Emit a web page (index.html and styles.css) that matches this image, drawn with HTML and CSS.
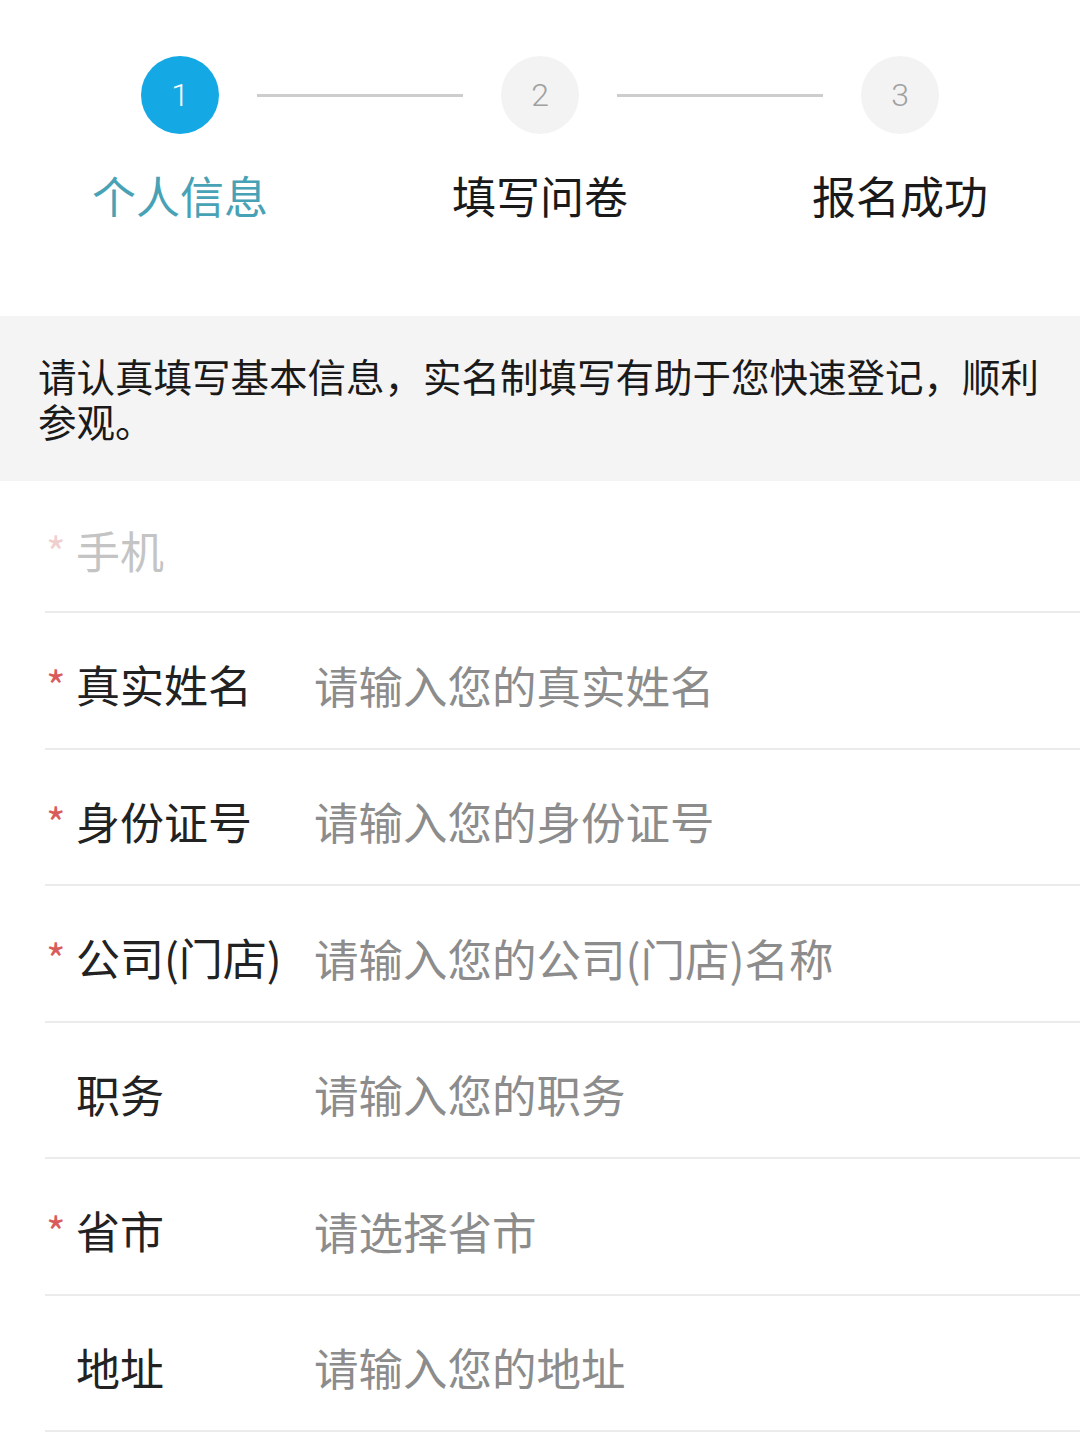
FILE: index.html
```html
<!DOCTYPE html>
<html lang="zh-CN">
<head>
  <meta charset="UTF-8" />
  <meta name="viewport" content="width=device-width, initial-scale=1.0"/>
  <title>报名 - 个人信息</title>
  <link rel="stylesheet" href="styles.css">
</head>
<body>
  <div class="steps">
    <div class="steps-track">
      <span class="step-dot active">1</span>
      <span class="step-line"></span>
      <span class="step-dot">2</span>
      <span class="step-line"></span>
      <span class="step-dot">3</span>
    </div>
    <div class="steps-labels">
      <span class="step-label active">个人信息</span>
      <span class="step-label">填写问卷</span>
      <span class="step-label">报名成功</span>
    </div>
  </div>

  <div class="notice">请认真填写基本信息，实名制填写有助于您快速登记，顺利参观。</div>

  <form class="info-form">
    <div class="field first disabled">
      <span class="req">*</span>
      <label for="phone">手机</label>
    </div>
    <div class="field">
      <span class="req">*</span>
      <label for="realname">真实姓名</label>
      <input type="text" id="realname" placeholder="请输入您的真实姓名" />
    </div>
    <div class="field">
      <span class="req">*</span>
      <label for="idcard">身份证号</label>
      <input type="text" id="idcard" placeholder="请输入您的身份证号" />
    </div>
    <div class="field">
      <span class="req">*</span>
      <label for="company">公司(门店)</label>
      <input type="text" id="company" placeholder="请输入您的公司(门店)名称" />
    </div>
    <div class="field">
      <span class="req"></span>
      <label for="job">职务</label>
      <input type="text" id="job" placeholder="请输入您的职务" />
    </div>
    <div class="field">
      <span class="req">*</span>
      <label for="city">省市</label>
      <input type="text" id="city" placeholder="请选择省市" readonly />
    </div>
    <div class="field">
      <span class="req"></span>
      <label for="address">地址</label>
      <input type="text" id="address" placeholder="请输入您的地址" />
    </div>
  </form>
</body>
</html>
```

FILE: styles.css
```css
body {
  margin: 0;
  padding: 0;
  background: #fff;
  color: #222;
  font-family: "Noto Sans CJK SC", "Noto Sans", sans-serif;
}

.steps {
  height: 316px;
  box-sizing: border-box;
  padding-top: 56px;
}

.steps-track {
  display: flex;
  align-items: center;
  padding: 0 141px;
}

.step-dot {
  width: 78px;
  height: 78px;
  border-radius: 50%;
  background-color: #f3f3f3;
  color: #a0a0a0;
  display: flex;
  align-items: center;
  justify-content: center;
  font-family: Roboto, sans-serif;
  font-weight: 300;
  font-size: 32px;
  flex-shrink: 0;
}

.step-dot.active {
  background-color: #14a8e5;
  color: #fff;
}

.step-line {
  flex: 1;
  height: 3px;
  margin: 0 38px;
  background-color: #cdcdcd;
}

.steps-labels {
  display: grid;
  grid-template-columns: repeat(3, 1fr);
  margin-top: 31px;
}

.step-label {
  text-align: center;
  font-size: 44px;
  line-height: 60px;
  color: #1a1a1a;
}

.step-label.active {
  color: #48a2b6;
}

.notice {
  background-color: #f4f4f4;
  padding: 37px 20px 38px 38px;
  font-size: 38.5px;
  line-height: 45px;
  color: #1a1a1a;
}

.info-form {
  margin-left: 45px;
}

.field {
  display: flex;
  align-items: center;
  height: 134.5px;
  border-bottom: 2px solid #ebebeb;
  font-size: 44px;
}

.field.first {
  height: 130px;
}

.req {
  width: 31px;
  flex-shrink: 0;
  padding: 10px 0 0 1px;
  font-size: 42px;
  line-height: 44px;
  color: #d95c5c;
  box-sizing: border-box;
}

.field label {
  width: 238px;
  flex-shrink: 0;
  padding-top: 8px;
  color: #222;
}

.field input {
  flex: 1;
  border: none;
  outline: none;
  padding: 8px 0 0;
  background: transparent;
  font-family: inherit;
  font-size: 44.5px;
  color: #222;
}

.field input::placeholder {
  color: #8c8c8c;
}

.field.disabled .req {
  color: #f0cfcf;
}

.field.disabled label {
  color: #c4c4c4;
}
```
